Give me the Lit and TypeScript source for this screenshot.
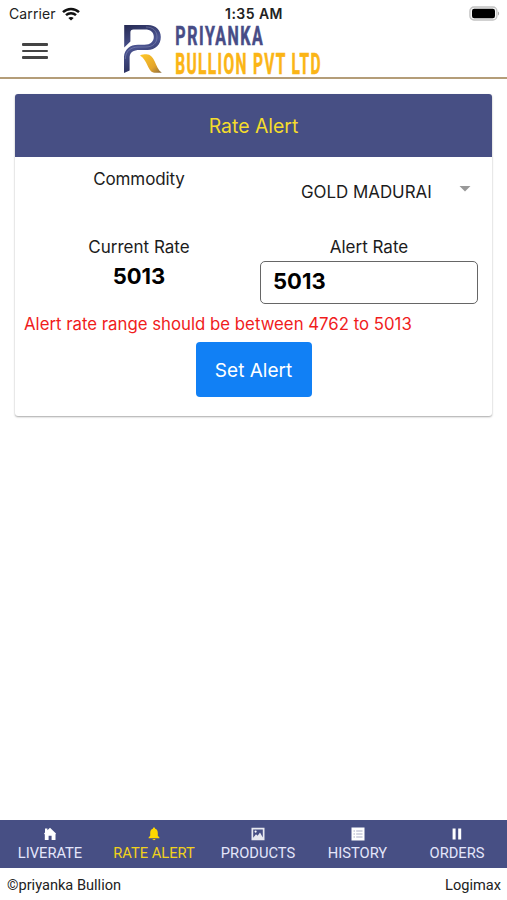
import { LitElement, html, css, svg } from "lit";
import { customElement, property } from "lit/decorators.js";
import { classMap } from "lit/directives/class-map.js";

const icons: Record<string, unknown> = {
  home: svg`<path fill="currentColor" d="M7 .8 13 6.600 12.500 7.400V13H8.600V8.800H5.600V13H1.800V7.400L1 6.600 2 5.600V1.600H4.400V3.300Z"/>`,
  bell: svg`<path fill="currentColor" d="M7 .6c.8 0 1.100.5 1.100 1.100C10 2.200 10.800 3.800 10.800 6v2.800L12.400 10.600v.7H1.600v-.7L3.200 8.800V6c0-2.200.8-3.800 2.700-4.300C5.900 1.100 6.200.6 7 .6ZM5.500 12h3c-.2.8-.8 1.200-1.500 1.200S5.700 12.800 5.500 12Z"/>`,
  image: svg`<path fill="currentColor" opacity=".88" fill-rule="evenodd" d="M.5.8h13v12.400H.5ZM2.200 2.400v8.400L5 7.200l1.600 1.600L9 5.600l2.800 4.800v-8Z"/><circle cx="4.600" cy="4.600" r="1.100" fill="currentColor"/>`,
  list: svg`<rect x=".5" y=".5" width="13" height="13" fill="currentColor"/><path stroke="#474f84" stroke-width=".9" opacity=".5" d="M2.500 4h1.500M5.200 4h6.300M2.500 7h1.500M5.200 7h6.300M2.500 10h1.500M5.200 10h6.300"/>`,
  pause: svg`<path fill="currentColor" d="M2.600 1.500h3v11h-3ZM8.200 1.500h3v11h-3Z"/>`,
};

@customElement("status-bar")
class StatusBar extends LitElement {
  static styles = css`
    :host { display: grid; grid-template-columns: 1fr auto 1fr; align-items: center; height: 27px; padding: 0 7px 0 9px; font: 14px/27px Inter, sans-serif; color: #222; }
    .left { display: flex; align-items: center; gap: 6px; }
    .carrier { letter-spacing: 0.1px; }
    .time { font-weight: 600; letter-spacing: 0.45px; margin-right: 1px; }
    .battery { justify-self: end; display: block; }
    svg { display: block; }
  `;
  render() {
    return html`
      <div class="left">
        <span class="carrier">Carrier</span>
        <svg width="18" height="14" viewBox="0 0 18 14" fill="none" stroke="#111" stroke-width="2.500">
          <path d="M1 5.100C5.500 .8 12.500 .8 17 5.100"/>
          <path d="M4 8.200C6.800 5.600 11.200 5.600 14 8.200"/>
          <path d="M9 13.600 6.300 11C7.800 9.600 10.200 9.600 11.700 11Z" fill="#111" stroke="none"/>
        </svg>
      </div>
      <span class="time">1:35 AM</span>
      <svg class="battery" width="31" height="15" viewBox="0 0 31 15">
        <rect x=".9" y="1" width="27" height="13" rx="4" fill="#f6f6f6" stroke="#c2c2c2" stroke-width="1.300"/>
        <rect x="3" y="2.800" width="23" height="9.400" rx="2.200" fill="#000"/>
        <path d="M29 5.500c1.500.7 1.500 3.300 0 4Z" fill="#aaa"/>
      </svg>`;
  }
}

@customElement("brand-header")
class BrandHeader extends LitElement {
  static styles = css`
    :host { display: flex; align-items: flex-start; box-sizing: border-box; height: 52px; padding-left: 22px; border-bottom: 2px solid #b49d78; }
    .menu { display: flex; flex-direction: column; gap: 4px; width: 26px; margin: 16px 74px 0 0; }
    .menu span { height: 2.500px; border-radius: 1px; background: #444; }
    .logo { display: block; margin-top: -3px; overflow: visible; }
    text { font-family: Roboto, sans-serif; font-weight: 700; letter-spacing: 2.500px; stroke-width: 0.6; }
    .top { fill: #474c86; stroke: #474c86; }
    .bottom { fill: #fbb516; stroke: #fbb516; }
  `;
  render() {
    return html`
      <div class="menu"><span></span><span></span><span></span></div>
      <svg class="logo" width="202" height="52" viewBox="0 0 202 52">
        <defs>
          <linearGradient id="navy" x1="0" y1="0" x2=".3" y2="1">
            <stop offset="0" stop-color="#252952"/><stop offset=".5" stop-color="#4b5491"/><stop offset="1" stop-color="#292e59"/>
          </linearGradient>
          <linearGradient id="gold" x1="0" y1="0" x2="1" y2="1">
            <stop offset="0" stop-color="#ffc928"/><stop offset=".65" stop-color="#e3a42b"/><stop offset="1" stop-color="#886a3d"/>
          </linearGradient>
        </defs>
        <path fill="url(#navy)" d="M2.200 1H26C34 1 38.800 6 38.800 13 38.800 20.500 33.500 26 25.500 26H18C11 26 8 28.500 7.600 33V46.500L2 49V32.500C2.500 25.500 8 20.800 16 20.800H22.500C28.500 20.800 31.800 17.500 31.800 12.800 31.800 8 28.500 5.400 23 5.400H11.500C9.300 5.400 8.400 6.500 8.400 8.500V17.500L2.200 23.500Z"/>
        <path fill="none" stroke="#a9afd2" stroke-width=".7" opacity=".5" d="M3.300 35C3.500 27 9 23.200 16 23H23.500C30.500 23 35 19.500 35 13 35 7 31 3 24 3"/>
        <path fill="url(#gold)" d="M18 31.500C20 30.500 22 30.300 24.500 30.300 28.500 30.500 30.500 33 32.500 37 34.500 41.500 36 46 39.800 48.800H32.500C29 48.500 27.500 45.500 25.500 41.500 23.500 37.500 22 34 18 31.500Z"/>
        <text class="top" x="53.300" y="20.800" font-size="26" textLength="89" lengthAdjust="spacingAndGlyphs">PRIYANKA</text>
        <text class="bottom" x="53.300" y="49.800" font-size="29" textLength="146.500" lengthAdjust="spacingAndGlyphs">BULLION PVT LTD</text>
      </svg>`;
  }
}

@customElement("rate-alert-card")
class RateAlertCard extends LitElement {
  static styles = css`
    :host { display: block; box-sizing: border-box; height: 321.500px; margin: 15px 15px 0; border-radius: 3px; background: #fff; box-shadow: 0 1px 2px rgba(0, 0, 0, 0.35); overflow: hidden; font: 17px/24px Inter, sans-serif; color: #1c1c1c; }
    h1 { margin: 0; height: 63px; background: #474f84; color: #f4dc2c; font: 400 19.400px/65px Inter, sans-serif; text-align: center; }
    .row { display: grid; grid-template-columns: 248px 1fr; text-align: center; }
    .commodity { height: 78px; }
    .commodity .label { padding-top: 10px; letter-spacing: -0.100px; }
    .select { display: flex; align-items: center; justify-content: space-between; height: 24px; margin: 23px 21px 0 38px; font-size: 16.900px; }
    .arrow { width: 12px; height: 6px; margin-bottom: 7px; background: #999; clip-path: polygon(0 0, 100% 0, 50% 100%); }
    .rates { height: 77px; }
    .value { font-size: 22px; font-weight: 700; line-height: 34px; color: #000; }
    .alert-col { text-align: left; }
    .alert-col .label { padding-right: 17px; text-align: center; }
    input { display: block; box-sizing: border-box; width: 217.500px; height: 43px; margin: 2px 0 0 -3px; padding: 0 12px 3px; border: 1.500px solid #666; border-radius: 5px; background: #fff; color: #000; font: 700 22px Inter, sans-serif; outline: none; }
    .hint { padding: 0 9px; color: #f01c1c; font-size: 16.800px; line-height: 24px; white-space: nowrap; }
    button { display: block; width: 116px; height: 55px; margin: 6px auto 0; padding: 2px 0 0; border: 0; border-radius: 4px; background: #1180f5; color: #fff; font: 400 19px Inter, sans-serif; }
  `;
  render() {
    return html`
      <h1>Rate Alert</h1>
      <div class="row commodity">
        <div class="label">Commodity</div>
        <div class="select"><span>GOLD MADURAI</span><i class="arrow"></i></div>
      </div>
      <div class="row rates">
        <div><div class="label">Current Rate</div><div class="value">5013</div></div>
        <div class="alert-col"><div class="label">Alert Rate</div><input .value=${"5013"} aria-label="Alert Rate" /></div>
      </div>
      <div class="hint">Alert rate range should be between 4762 to 5013</div>
      <button>Set Alert</button>`;
  }
}

@customElement("tab-item")
class TabItem extends LitElement {
  @property() icon = "home";
  @property() label = "";
  @property({ type: Boolean }) active = false;
  static styles = css`
    .tab { display: flex; flex-direction: column; align-items: center; padding-top: 7px; color: #fff; }
    .active { color: #ffd800; }
    .label { font: 14.700px/20px Roboto, sans-serif; margin-top: 2.500px; color: #e4e6fb; white-space: nowrap; }
    .active .label { color: #f2d21b; }
    svg { display: block; }
  `;
  render() {
    return html`<div class=${classMap({ tab: true, active: this.active })}>
      <svg width="14" height="14" viewBox="0 0 14 14">${icons[this.icon]}</svg>
      <span class="label">${this.label}</span>
    </div>`;
  }
}

@customElement("app-root")
class AppRoot extends LitElement {
  static styles = css`
    :host { display: flex; flex-direction: column; height: 900px; background: #fff; }
    main { flex: 1; }
    nav { display: grid; grid-template-columns: 100px 108px 100px 99px 100px; height: 48.500px; background: #474f84; }
    footer { display: flex; justify-content: space-between; height: 32px; padding: 0 6px 0 7px; font: 14.600px/34px Roboto, sans-serif; color: #222; }
  `;
  render() {
    return html`
      <status-bar></status-bar>
      <brand-header></brand-header>
      <main><rate-alert-card></rate-alert-card></main>
      <nav>
        <tab-item icon="home" label="LIVERATE"></tab-item>
        <tab-item icon="bell" label="RATE ALERT" active></tab-item>
        <tab-item icon="image" label="PRODUCTS"></tab-item>
        <tab-item icon="list" label="HISTORY"></tab-item>
        <tab-item icon="pause" label="ORDERS"></tab-item>
      </nav>
      <footer><span>©priyanka Bullion</span><span>Logimax</span></footer>`;
  }
}
